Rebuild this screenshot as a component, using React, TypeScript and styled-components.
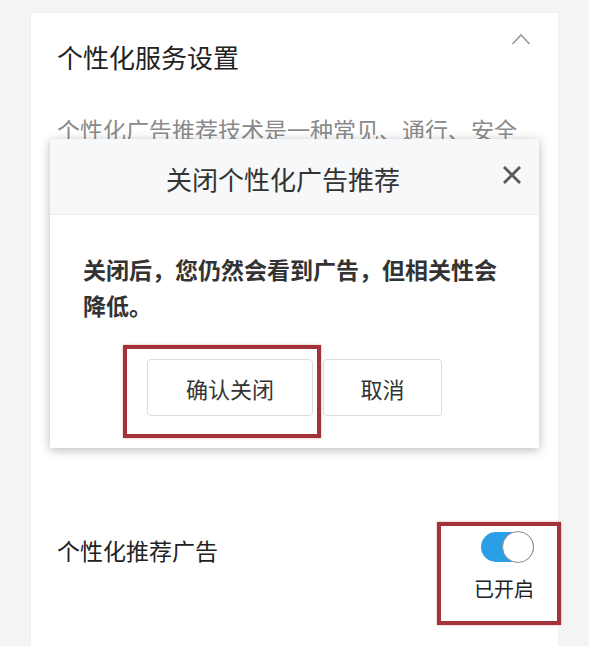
import React from "react";
import styled, { createGlobalStyle } from "styled-components";

const GlobalStyle = createGlobalStyle`
  html, body {
    margin: 0;
    padding: 0;
    overflow: hidden;
    background: #f4f4f4;
  }
  body {
    font-family: "Noto Sans CJK SC", "Noto Sans", sans-serif;
  }
`;

const Page = styled.div`
  height: 646px;
  box-sizing: border-box;
  padding: 13px 31px 0 31px;
  display: flex;
  flex-direction: column;
  overflow: hidden;
`;

const Card = styled.section`
  position: relative;
  flex: 1;
  background: #ffffff;
  box-shadow: 0 0 1px rgba(0, 0, 0, 0.06);
  padding: 20px 24px 0 26px;
  display: flex;
  flex-direction: column;
`;

const Header = styled.div`
  display: flex;
  justify-content: space-between;
  align-items: flex-start;
  padding-right: 3px;
`;

const Title = styled.h1`
  margin: 6px 0 0 0;
  font-size: 26px;
  line-height: 36px;
  font-weight: 400;
  color: #222;
`;

const Chevron = styled.svg`
  width: 20px;
  height: 12px;
  display: block;
`;

const Description = styled.p`
  margin: 37px 0 0 0;
  font-size: 23px;
  line-height: 34px;
  color: #8a8a8a;
  white-space: nowrap;
`;

const SettingRow = styled.div`
  margin-top: 386px;
  display: flex;
  justify-content: space-between;
  align-items: flex-start;
`;

const SettingLabel = styled.span`
  margin-top: 1px;
  font-size: 23px;
  line-height: 34px;
  color: #222;
`;

const ToggleColumn = styled.div`
  position: relative;
  width: 60px;
  display: flex;
  flex-direction: column;
  align-items: flex-end;
  gap: 13px;
`;

const Track = styled.div<{ $on: boolean }>`
  position: relative;
  width: 53px;
  height: 30px;
  border-radius: 15px;
  background: ${(p) => (p.$on ? "#2b9ee8" : "#ccc")};
`;

const Knob = styled.div`
  position: absolute;
  right: 0;
  top: -1px;
  width: 30px;
  height: 30px;
  border-radius: 50%;
  background: #ffffff;
  border: 1.5px solid #8f8f8f;
`;

const ToggleText = styled.span`
  font-size: 20px;
  line-height: 28px;
  color: #222;
  width: 60px;
  text-align: center;
`;

const Highlight = styled.div<{ $l: number; $t: number; $r: number; $b: number }>`
  position: absolute;
  left: ${(p) => p.$l}px;
  top: ${(p) => p.$t}px;
  right: ${(p) => p.$r}px;
  bottom: ${(p) => p.$b}px;
  border: 4px solid #a3323b;
  box-shadow: 0 0 2px rgba(200, 60, 60, 0.5);
  pointer-events: none;
`;

const Dialog = styled.div`
  position: absolute;
  left: 19px;
  top: 126px;
  width: 489px;
  background: #ffffff;
  box-shadow: 0 2px 10px rgba(0, 0, 0, 0.28);
  display: flex;
  flex-direction: column;
`;

const DialogHeader = styled.div`
  height: 76px;
  box-sizing: border-box;
  background: #f6f8fa;
  border-bottom: 1px solid #ebebeb;
  display: flex;
  align-items: center;
  justify-content: space-between;
  padding: 0 17px 0 116px;
`;

const DialogTitle = styled.h2`
  margin: 5px 0 0 0;
  font-size: 26px;
  line-height: 36px;
  font-weight: 400;
  color: #333;
`;

const CloseIcon = styled.svg`
  width: 20px;
  height: 18px;
  margin-bottom: 4px;
  display: block;
`;

const DialogBody = styled.div`
  padding: 36px 33px 32px 33px;
  display: flex;
  flex-direction: column;
`;

const Message = styled.p`
  margin: 0;
  font-size: 23px;
  line-height: 36px;
  font-weight: 700;
  color: #333;
`;

const Actions = styled.div`
  margin-top: 36px;
  display: flex;
  justify-content: center;
  gap: 10px;
`;

const ButtonWrap = styled.div`
  position: relative;
  display: flex;
`;

const Button = styled.button<{ $w: number }>`
  width: ${(p) => p.$w}px;
  height: 57px;
  background: #ffffff;
  border: 1px solid #dcdcdc;
  border-radius: 4px;
  font-family: "Noto Sans CJK SC", "Noto Sans", sans-serif;
  font-size: 22px;
  color: #333;
  padding: 0;
  cursor: pointer;
`;

export default function App() {
  return (
    <>
      <GlobalStyle />
      <Page>
        <Card>
          <Header>
            <Title>个性化服务设置</Title>
            <Chevron viewBox="0 0 20 12">
              <polyline
                points="1.5,11 10,2 18.5,11"
                fill="none"
                stroke="#9a9a9a"
                strokeWidth="1.6"
              />
            </Chevron>
          </Header>
          <Description>个性化广告推荐技术是一种常见、通行、安全</Description>
          <SettingRow>
            <SettingLabel>个性化推荐广告</SettingLabel>
            <ToggleColumn>
              <Track $on>
                <Knob />
              </Track>
              <ToggleText>已开启</ToggleText>
              <Highlight $l={-37} $t={-10} $r={-27} $b={-22} />
            </ToggleColumn>
          </SettingRow>

          <Dialog>
            <DialogHeader>
              <DialogTitle>关闭个性化广告推荐</DialogTitle>
              <CloseIcon viewBox="0 0 20 18">
                <line x1="2" y1="1" x2="18" y2="17" stroke="#5a5a5a" strokeWidth="2.8" />
                <line x1="18" y1="1" x2="2" y2="17" stroke="#5a5a5a" strokeWidth="2.8" />
              </CloseIcon>
            </DialogHeader>
            <DialogBody>
              <Message>关闭后，您仍然会看到广告，但相关性会降低。</Message>
              <Actions>
                <ButtonWrap>
                  <Button $w={166}>确认关闭</Button>
                  <Highlight $l={-24} $t={-14} $r={-8} $b={-22} />
                </ButtonWrap>
                <Button $w={119}>取消</Button>
              </Actions>
            </DialogBody>
          </Dialog>
        </Card>
      </Page>
    </>
  );
}
